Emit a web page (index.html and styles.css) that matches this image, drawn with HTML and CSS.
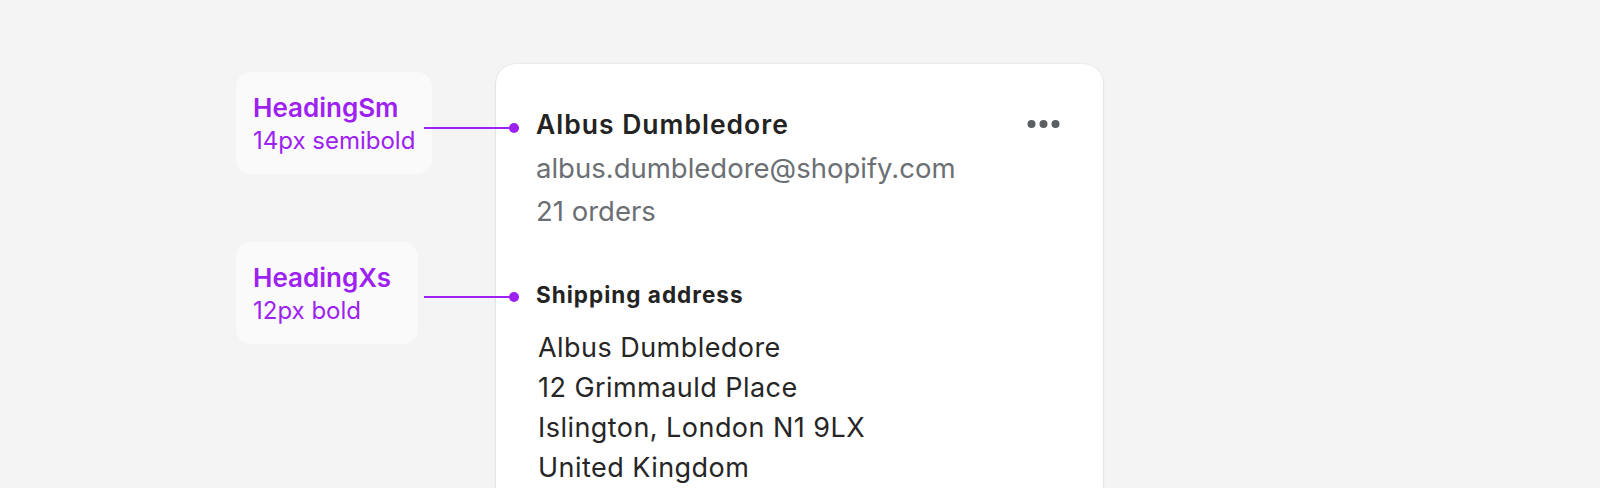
FILE: index.html
```html
<!DOCTYPE html>
<html lang="en">
<head>
<meta charset="utf-8">
<title>Heading annotations</title>
<link rel="stylesheet" href="styles.css">
</head>
<body>
<main class="stage">
  <aside class="labels">
    <div class="label label-sm">
      <div class="label-title">HeadingSm</div>
      <div class="label-sub">14px semibold</div>
    </div>
    <div class="label label-xs">
      <div class="label-title">HeadingXs</div>
      <div class="label-sub">12px bold</div>
    </div>
  </aside>
  <section class="card">
    <div class="card-head">
      <h2 class="heading-sm"><span class="connector connector-sm"></span>Albus Dumbledore</h2>
      <button class="more" aria-label="More actions">
        <svg width="36" height="20" viewBox="0 0 36 20" aria-hidden="true">
          <circle cx="4.5" cy="10" r="4"/>
          <circle cx="16.5" cy="10" r="4"/>
          <circle cx="28.5" cy="10" r="4"/>
        </svg>
      </button>
    </div>
    <p class="meta meta-email">albus.dumbledore@shopify.com</p>
    <p class="meta">21 orders</p>
    <h3 class="heading-xs"><span class="connector connector-xs"></span>Shipping address</h3>
    <address class="address">
      <span>Albus Dumbledore</span>
      <span>12 Grimmauld Place</span>
      <span>Islington, London N1 9LX</span>
      <span>United Kingdom</span>
    </address>
  </section>
</main>
</body>
</html>
```

FILE: styles.css
```css
* { box-sizing: border-box; }

html, body {
  margin: 0;
  padding: 0;
  height: 100%;
}

body {
  background: #f4f4f4;
  font-family: Inter, "Noto Sans", "Liberation Sans", sans-serif;
  overflow: hidden;
}

.stage {
  display: flex;
  align-items: flex-start;
  padding: 64px 0 0 236px;
  gap: 64px;
}

.labels {
  flex: 0 0 196px;
  width: 196px;
  display: flex;
  flex-direction: column;
  align-items: flex-start;
  gap: 68px;
  padding-top: 8px;
}

.label {
  background: #fafafa;
  border-radius: 15px;
  padding: 19px 17px 18px 17px;
  color: #9d22f2;
  white-space: nowrap;
}

.label-xs { min-width: 182px; }

.label-title {
  font-size: 26px;
  line-height: 34px;
  font-weight: 600;
}

.label-sub {
  font-size: 24px;
  line-height: 31px;
  font-weight: 400;
}

.card {
  flex: 0 0 607px;
  width: 607px;
  min-height: 520px;
  background: #ffffff;
  border-radius: 20px;
  box-shadow: 0 1px 3px rgba(0, 0, 0, 0.10), 0 0 0 1px rgba(0, 0, 0, 0.025);
  padding: 40px 40px 0 40px;
}

.card-head {
  display: flex;
  align-items: center;
  justify-content: space-between;
}

.heading-sm {
  position: relative;
  margin: 0;
  font-size: 26.5px;
  letter-spacing: 1px;
  line-height: 40px;
  font-weight: 600;
  color: #232323;
}

.more {
  border: 0;
  padding: 0;
  background: none;
  display: flex;
}

.more svg { fill: #5c5f62; display: block; }

.meta {
  margin: 0;
  font-size: 27.5px;
  line-height: 43px;
  color: #6b6f74;
}

.meta-email { margin-top: 3px; }

.heading-xs {
  position: relative;
  margin: 46px 0 0 0;
  font-size: 22.5px;
  letter-spacing: 1px;
  line-height: 32px;
  font-weight: 700;
  color: #232323;
}

.address {
  display: flex;
  flex-direction: column;
  margin-top: 17px;
  padding-left: 2px;
  font-style: normal;
  font-size: 27px;
  letter-spacing: 0.45px;
  line-height: 40px;
  color: #262626;
}

.connector {
  position: absolute;
  left: -112px;
  width: 95px;
  height: 2px;
  background: #9d22f2;
}

.connector::after {
  content: "";
  position: absolute;
  right: 0;
  top: -4px;
  width: 10px;
  height: 10px;
  border-radius: 50%;
  background: #9d22f2;
}

.connector-sm { top: 23px; }
.connector-xs { top: 17px; }
```
